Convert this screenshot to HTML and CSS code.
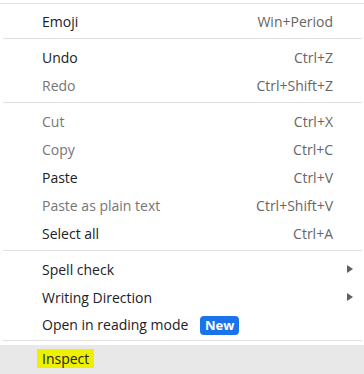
FILE: index.html
```html
<!DOCTYPE html>
<html lang="en">
<head>
  <meta charset="UTF-8" />
  <meta name="viewport" content="width=device-width, initial-scale=1.0"/>
  <title>Context Menu</title>
  <link rel="stylesheet" href="styles.css">
</head>
<body>
<div class="menu">
  <div class="sep sep-top"></div>

  <div class="item"><span class="label">Emoji</span><span class="key">Win+Period</span></div>
  <div class="sep"></div>

  <div class="item"><span class="label">Undo</span><span class="key">Ctrl+Z</span></div>
  <div class="item disabled"><span class="label">Redo</span><span class="key">Ctrl+Shift+Z</span></div>
  <div class="sep"></div>

  <div class="item disabled"><span class="label">Cut</span><span class="key">Ctrl+X</span></div>
  <div class="item disabled"><span class="label">Copy</span><span class="key">Ctrl+C</span></div>
  <div class="item"><span class="label">Paste</span><span class="key">Ctrl+V</span></div>
  <div class="item disabled"><span class="label">Paste as plain text</span><span class="key">Ctrl+Shift+V</span></div>
  <div class="item"><span class="label">Select all</span><span class="key">Ctrl+A</span></div>
  <div class="sep"></div>

  <div class="item submenu"><span class="label">Spell check</span><span class="arrow"></span></div>
  <div class="item submenu"><span class="label">Writing Direction</span><span class="arrow"></span></div>
  <div class="item"><span class="label">Open in reading mode <span class="badge">New</span></span></div>
  <div class="sep sep-last"></div>

  <div class="item hovered"><span class="label"><mark class="hl">Inspect</mark></span></div>
</div>
</body>
</html>
```

FILE: styles.css
```css
body {
  margin: 0;
  background-color: #ffffff;
  font-family: "Open Sans", "Noto Sans", sans-serif;
  font-size: 14px;
  color: #202124;
}

.menu {
  width: 364px;
  height: 374px;
  overflow: hidden;
  padding-top: 3px;
  box-sizing: border-box;
}

.sep {
  height: 1px;
  background-color: #e0e0e0;
  margin: 3px 2px 4px 3px;
}

.sep-top {
  margin: 0 0 3px 0;
}

.sep-last {
  margin: 1px 2px 4px 3px;
}

.item {
  display: flex;
  align-items: center;
  justify-content: space-between;
  height: 28px;
  padding: 0 31px 0 42px;
}

.item .key {
  color: #666666;
}

.disabled .label {
  color: #767676;
}

.submenu {
  padding-right: 11px;
}

.arrow {
  width: 0;
  height: 0;
  border-top: 4px solid transparent;
  border-bottom: 4px solid transparent;
  border-left: 6px solid #5f5f5f;
}

.badge {
  display: inline-block;
  margin-left: 8px;
  padding: 0 5px;
  height: 19px;
  line-height: 19px;
  border-radius: 4px;
  background-color: #1a73e8;
  color: #ffffff;
  font-weight: bold;
  font-size: 13px;
  vertical-align: middle;
}

.hovered {
  background-color: #e8e8e8;
  height: 30px;
  padding-left: 37px;
  align-items: flex-start;
  padding-top: 4px;
  box-sizing: border-box;
}

.hl {
  background-color: #eef000;
  color: #202124;
  padding: 0 5px;
  display: inline-block;
  height: 19px;
  line-height: 19px;
}
```
